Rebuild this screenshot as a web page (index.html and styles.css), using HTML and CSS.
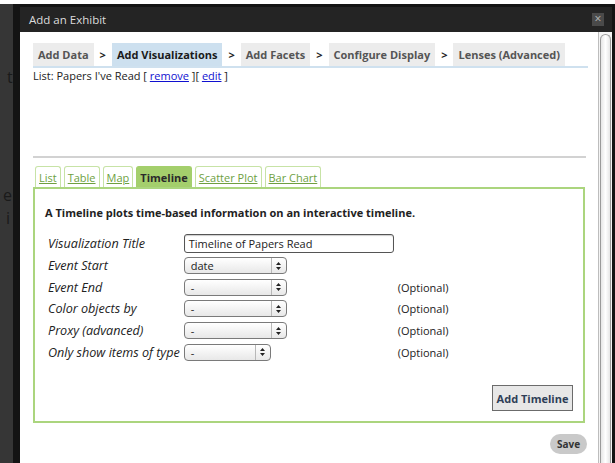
FILE: index.html
```html
<!DOCTYPE html>
<html lang="en">
<head>
<meta charset="utf-8">
<title>Add an Exhibit</title>
<link rel="stylesheet" href="styles.css">
</head>
<body>
<div class="top-strip"></div>
<div class="stage">
  <div class="backdrop">
    <span class="ghost g1">t</span>
    <span class="ghost g2">e</span>
    <span class="ghost g3">i</span>
  </div>
  <div class="dialog">
    <div class="titlebar">
      <span class="title">Add an Exhibit</span>
      <span class="close">×</span>
    </div>
    <div class="dialog-body">
      <div class="content">
        <div class="steps">
          <span class="step">Add Data</span>
          <span class="sep">&gt;</span>
          <span class="step current">Add Visualizations</span>
          <span class="sep">&gt;</span>
          <span class="step">Add Facets</span>
          <span class="sep">&gt;</span>
          <span class="step">Configure Display</span>
          <span class="sep">&gt;</span>
          <span class="step">Lenses (Advanced)</span>
        </div>
        <div class="view-list">
          List: Papers I've Read [ <a href="#">remove</a> ][ <a href="#">edit</a> ]
        </div>
        <hr class="divider">
        <div class="view-tabs">
          <a class="vtab" href="#">List</a>
          <a class="vtab" href="#">Table</a>
          <a class="vtab" href="#">Map</a>
          <span class="vtab active">Timeline</span>
          <a class="vtab" href="#">Scatter Plot</a>
          <a class="vtab" href="#">Bar Chart</a>
        </div>
        <div class="panel">
          <p class="intro">A Timeline plots time-based information on an interactive timeline.</p>
          <table class="form">
            <tr>
              <td class="label">Visualization Title</td>
              <td class="ctl"><div class="textbox">Timeline of Papers Read</div></td>
              <td></td>
            </tr>
            <tr>
              <td class="label">Event Start</td>
              <td class="ctl"><div class="select"><span>date</span><span class="arrows"><svg width="7" height="10" viewBox="0 0 7 10"><path d="M3.5 1 L6 4 L1 4 Z M3.5 9 L6 6 L1 6 Z" fill="#222"/></svg></span></div></td>
              <td></td>
            </tr>
            <tr>
              <td class="label">Event End</td>
              <td class="ctl"><div class="select"><span>-</span><span class="arrows"><svg width="7" height="10" viewBox="0 0 7 10"><path d="M3.5 1 L6 4 L1 4 Z M3.5 9 L6 6 L1 6 Z" fill="#222"/></svg></span></div></td>
              <td class="opt">(Optional)</td>
            </tr>
            <tr>
              <td class="label">Color objects by</td>
              <td class="ctl"><div class="select"><span>-</span><span class="arrows"><svg width="7" height="10" viewBox="0 0 7 10"><path d="M3.5 1 L6 4 L1 4 Z M3.5 9 L6 6 L1 6 Z" fill="#222"/></svg></span></div></td>
              <td class="opt">(Optional)</td>
            </tr>
            <tr>
              <td class="label">Proxy (advanced)</td>
              <td class="ctl"><div class="select"><span>-</span><span class="arrows"><svg width="7" height="10" viewBox="0 0 7 10"><path d="M3.5 1 L6 4 L1 4 Z M3.5 9 L6 6 L1 6 Z" fill="#222"/></svg></span></div></td>
              <td class="opt">(Optional)</td>
            </tr>
            <tr>
              <td class="label">Only show items of type</td>
              <td class="ctl"><div class="select short"><span>-</span><span class="arrows"><svg width="7" height="10" viewBox="0 0 7 10"><path d="M3.5 1 L6 4 L1 4 Z M3.5 9 L6 6 L1 6 Z" fill="#222"/></svg></span></div></td>
              <td class="opt">(Optional)</td>
            </tr>
          </table>
          <div class="panel-actions">
            <button class="add-btn" type="button">Add Timeline</button>
          </div>
        </div>
        <div class="footer">
          <button class="save-btn" type="button">Save</button>
        </div>
      </div>
      <div class="scrollbar"><div class="thumb"></div></div>
    </div>
  </div>
</div>
</body>
</html>
```

FILE: styles.css
```css
* {
  box-sizing: border-box;
}

html, body {
  margin: 0;
  padding: 0;
  width: 615px;
  height: 463px;
  overflow: hidden;
  background: #3a3a3a;
  font-family: "Open Sans", "DejaVu Sans", sans-serif;
  font-size: 11px;
  color: #222;
}

.top-strip {
  height: 4px;
  background: #ffffff;
}

.stage {
  display: flex;
  height: 459px;
}

/* dimmed page behind the dialog */
.backdrop {
  position: relative;
  width: 13px;
  background: #363636;
  overflow: hidden;
}

.ghost {
  position: absolute;
  font-size: 16px;
  color: #1a1a1a;
}
.g1 { top: 62px; left: 7px; }
.g2 { top: 180px; left: 3px; }
.g3 { top: 203px; left: 6px; }

.dialog {
  flex: 1;
  display: flex;
  flex-direction: column;
  background: #141414;
  padding: 3px 3px 0 7px;
}

.titlebar {
  height: 25px;
  display: flex;
  align-items: center;
  justify-content: space-between;
  background: #242424;
  padding: 0 8px 0 9px;
}

.title {
  color: #dcdcdc;
  font-size: 11.5px;
}

.close {
  width: 12px;
  height: 13px;
  background: #4a4a4a;
  color: #bbbbbb;
  font-size: 12px;
  line-height: 12px;
  text-align: center;
}

.dialog-body {
  flex: 1;
  display: flex;
}

.content {
  flex: 1;
  background: #ffffff;
  padding: 11px 10px 0 13px;
}

/* wizard steps */
.steps {
  display: flex;
  align-items: stretch;
  border-bottom: 2px solid #cfe1ef;
  height: 25px;
}

.step {
  display: flex;
  align-items: center;
  padding: 0 5px;
  background: #ececec;
  color: #555;
  font-weight: bold;
}

.step.current {
  background: #cde0ef;
  color: #1a1a1a;
}

.sep {
  display: flex;
  align-items: center;
  padding: 0 6px;
  font-weight: bold;
  color: #222;
}

.view-list {
  margin-top: 1px;
  line-height: 14px;
}

.view-list a {
  color: #1010d0;
}

.divider {
  margin: 73px 0 0 0;
  height: 0;
  border: 0;
  border-top: 2px solid #d2d2d2;
  width: 553px;
}

/* visualization type tabs */
.view-tabs {
  display: flex;
  gap: 3px;
  margin-top: 8px;
  padding-left: 2px;
  height: 21px;
}

.vtab {
  display: flex;
  align-items: center;
  padding: 0 3px;
  border: 1px solid #c7e3a6;
  border-bottom: 0;
  border-radius: 3px 3px 0 0;
  color: #6e9f3f;
  text-decoration: underline;
}

.vtab.active {
  background: #a4cf6c;
  border-color: #a4cf6c;
  color: #2a2a2a;
  font-weight: bold;
  text-decoration: none;
}

.panel {
  width: 552px;
  height: 236px;
  border: 2px solid #abd57e;
  padding: 0 10px 0 10px;
  display: flex;
  flex-direction: column;
  align-items: flex-start;
}

.intro {
  margin: 17px 0 12px 0;
  font-weight: bold;
  line-height: 14px;
}

.form {
  border-collapse: collapse;
}

.form td {
  padding: 0 1px;
  height: 21.6px;
}

.form tr:first-child td {
  height: 23px;
}

.form .label {
  font-style: italic;
  font-size: 12.6px;
  padding-left: 3px;
  white-space: nowrap;
}

.form .ctl {
  padding-left: 3px;
}

.form .opt {
  padding-left: 3px;
}

.textbox {
  width: 210px;
  height: 19px;
  border: 1px solid #555;
  border-radius: 3px;
  padding: 0 4px;
  line-height: 17px;
  box-shadow: inset 0 1px 1px rgba(0, 0, 0, 0.2);
}

.select {
  width: 103px;
  height: 17px;
  display: flex;
  align-items: center;
  justify-content: space-between;
  border: 1px solid #7a7a7a;
  border-radius: 4px;
  background: linear-gradient(#ffffff, #e8e8e8);
  padding-left: 6px;
  line-height: 15px;
}

.select.short {
  width: 87px;
}

.arrows {
  width: 15px;
  height: 15px;
  display: flex;
  align-items: center;
  justify-content: center;
  border-left: 1px solid #b8b8b8;
}

.panel-actions {
  margin-top: auto;
  margin-bottom: 10px;
  align-self: stretch;
  display: flex;
  justify-content: flex-end;
}

.add-btn {
  width: 81px;
  height: 26px;
  border: 1px solid #6b6b6b;
  background: #e7e7e7;
  font-family: inherit;
  font-size: 11px;
  font-weight: bold;
  color: #2e3e57;
  padding: 0;
}

.footer {
  display: flex;
  justify-content: flex-end;
  padding: 11px 1px 0 0;
}

.save-btn {
  width: 37px;
  height: 20px;
  border: 0;
  border-radius: 10px;
  background: #c9c9c9;
  font-family: inherit;
  font-size: 10px;
  font-weight: bold;
  color: #333;
  padding: 0;
}

/* vertical scrollbar */
.scrollbar {
  width: 14px;
  background: #f4f4f4;
  border-left: 1px solid #bdbdbd;
  padding: 2px 1px 0 1px;
}

.thumb {
  height: 100%;
  border: 1px solid #9a9a9a;
  border-bottom: 0;
  border-radius: 6px 6px 0 0;
  background: linear-gradient(90deg, #e6e6e6, #ffffff 50%, #e6e6e6);
}
```
